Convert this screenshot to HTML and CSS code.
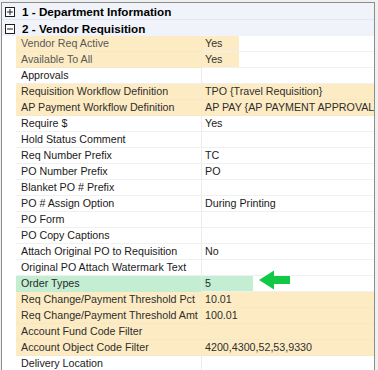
FILE: index.html
```html
<!DOCTYPE html>
<html>
<head>
<meta charset="utf-8">
<link rel="stylesheet" href="styles.css">
</head>
<body>
<div class="grid">
  <div class="cat cat-first">
    <svg class="toggle" width="10" height="10" viewBox="0 0 10 10"><rect x="0.5" y="0.5" width="9" height="9" fill="#fff" stroke="#1e1e1e"/><path d="M2 5h6M5 2v6" stroke="#1e1e1e"/></svg>
    <span class="cat-title">1 - Department Information</span>
  </div>
  <div class="cat">
    <svg class="toggle" width="10" height="10" viewBox="0 0 10 10"><rect x="0.5" y="0.5" width="9" height="9" fill="#fff" stroke="#1e1e1e"/><path d="M2 5h6" stroke="#1e1e1e"/></svg>
    <span class="cat-title">2 - Vendor Requisition</span>
  </div>

  <div class="row"><div class="gutter"></div><div class="name yellow dim">Vendor Req Active</div><div class="value"><span class="vhl yellow w-yes">Yes</span></div></div>
  <div class="row"><div class="gutter"></div><div class="name yellow dim">Available To All</div><div class="value"><span class="vhl yellow w-yes">Yes</span></div></div>
  <div class="row"><div class="gutter"></div><div class="name">Approvals</div><div class="value"></div></div>
  <div class="row"><div class="gutter"></div><div class="name yellow">Requisition Workflow Definition</div><div class="value yellow">TPO {Travel Requisition}</div></div>
  <div class="row"><div class="gutter"></div><div class="name yellow">AP Payment Workflow Definition</div><div class="value yellow">AP PAY {AP PAYMENT APPROVAL}</div></div>
  <div class="row"><div class="gutter"></div><div class="name">Require $</div><div class="value">Yes</div></div>
  <div class="row"><div class="gutter"></div><div class="name">Hold Status Comment</div><div class="value"></div></div>
  <div class="row"><div class="gutter"></div><div class="name">Req Number Prefix</div><div class="value">TC</div></div>
  <div class="row"><div class="gutter"></div><div class="name">PO Number Prefix</div><div class="value">PO</div></div>
  <div class="row"><div class="gutter"></div><div class="name">Blanket PO # Prefix</div><div class="value"></div></div>
  <div class="row"><div class="gutter"></div><div class="name">PO # Assign Option</div><div class="value">During Printing</div></div>
  <div class="row"><div class="gutter"></div><div class="name">PO Form</div><div class="value"></div></div>
  <div class="row"><div class="gutter"></div><div class="name">PO Copy Captions</div><div class="value"></div></div>
  <div class="row"><div class="gutter"></div><div class="name">Attach Original PO to Requisition</div><div class="value">No</div></div>
  <div class="row"><div class="gutter"></div><div class="name">Original PO Attach Watermark Text</div><div class="value"></div></div>
  <div class="row"><div class="gutter"></div><div class="name green">Order Types</div><div class="value"><span class="vhl green w-five">5</span></div></div>
  <div class="row"><div class="gutter"></div><div class="name yellow">Req Change/Payment Threshold Pct</div><div class="value yellow">10.01</div></div>
  <div class="row"><div class="gutter"></div><div class="name yellow">Req Change/Payment Threshold Amt</div><div class="value yellow">100.01</div></div>
  <div class="row"><div class="gutter"></div><div class="name yellow">Account Fund Code Filter</div><div class="value yellow"></div></div>
  <div class="row"><div class="gutter"></div><div class="name yellow">Account Object Code Filter</div><div class="value yellow">4200,4300,52,53,9330</div></div>
  <div class="row"><div class="gutter"></div><div class="name">Delivery Location</div><div class="value"></div></div>

  <svg class="arrow" width="32" height="20" viewBox="0 0 32 20"><polygon points="0,10 15,0.5 15,6 31,6 31,14 15,14 15,19.5" fill="#12c847"/></svg>
</div>
</body>
</html>
```

FILE: styles.css
```css
html, body {
  margin: 0;
  padding: 0;
  background: #f0f0f0;
  overflow: hidden;
}

body {
  font-family: "Liberation Sans", Arial, sans-serif;
  font-size: 10.7px;
  color: #1a1a1a;
}

.grid {
  position: relative;
  margin: 2px 3px 0 1px;
  border: 1px solid #8c8c8c;
  border-bottom: none;
  background: #ffffff;
  height: 400px;
}

.cat {
  display: flex;
  align-items: center;
  height: 16px;
  padding-left: 3px;
  background: #f0f4fa;
}

.cat-first {
  height: 16px;
  border-bottom: 1px solid #e3e8ef;
}

.toggle {
  display: block;
  flex: none;
  width: 10px;
  height: 10px;
  margin-top: 1px;
}

.cat-title {
  margin-left: 7px;
  font-weight: bold;
  font-size: 11.7px;
  line-height: 16px;
  color: #000;
  padding-top: 1px;
  white-space: nowrap;
}

.row {
  display: grid;
  grid-template-columns: 14px 186px 1fr;
  height: 16px;
}

.gutter {
  background: #ffffff;
}

.name,
.value {
  height: 15px;
  line-height: 15px;
  padding-top: 0;
  border-bottom: 1px solid #f0f0f0;
  white-space: nowrap;
  overflow: hidden;
}

.name {
  padding-left: 5px;
  border-right: 1px solid #ececec;
  color: #1a1a1a;
}

.value {
  padding-left: 3px;
  display: flex;
  color: #1a1a1a;
}

.name.yellow,
.value.yellow {
  background: #fdecc3;
  border-bottom-color: #f7e7c4;
  color: #2e2e2e;
}

.name.yellow {
  border-right-color: #f8e9c8;
}

.name.green {
  background: #c4eed2;
  border-bottom-color: #c4eed2;
  border-right-color: #d5f2de;
  color: #2a2a2a;
}

.name.dim {
  color: #585858;
}

.value:has(.vhl) {
  padding-left: 0;
}

.vhl {
  display: block;
  height: 15px;
  padding-left: 3px;
  box-sizing: border-box;
  color: #333;
}

.vhl.yellow {
  background: #fdecc3;
}

.vhl.green {
  background: #c4eed2;
  color: #2a2a2a;
}

.w-yes {
  width: 37px;
}

.w-five {
  width: 51px;
}

.arrow {
  position: absolute;
  left: 257px;
  top: 267px;
}
```
